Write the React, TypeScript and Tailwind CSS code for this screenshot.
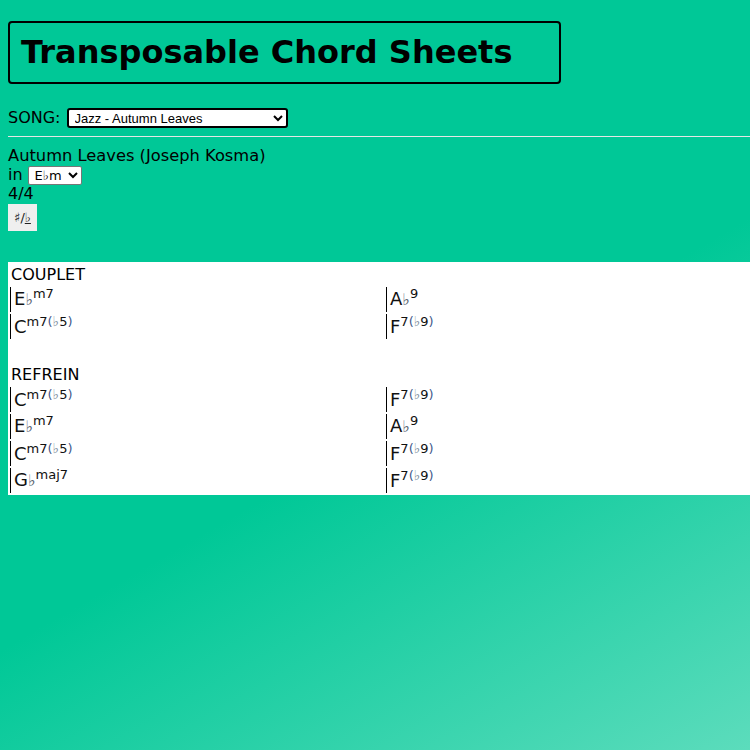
import { useState } from "react";

type Chord = { root: string; flat?: boolean; ext?: string; alt?: string };

const couplet: Chord[][] = [
  [{ root: "E", flat: true, ext: "m7" }, { root: "A", flat: true, ext: "9" }],
  [{ root: "C", ext: "m7", alt: "5" }, { root: "F", ext: "7", alt: "9" }],
];

const refrein: Chord[][] = [
  [{ root: "C", ext: "m7", alt: "5" }, { root: "F", ext: "7", alt: "9" }],
  [{ root: "E", flat: true, ext: "m7" }, { root: "A", flat: true, ext: "9" }],
  [{ root: "C", ext: "m7", alt: "5" }, { root: "F", ext: "7", alt: "9" }],
  [{ root: "G", flat: true, ext: "maj7" }, { root: "F", ext: "7", alt: "9" }],
];

const ChordName = ({ chord }: { chord: Chord }) => (
  <span className="font-['DejaVu_Sans',sans-serif] text-[18px] leading-[22px] text-[#111]">
    {chord.root}
    {chord.flat && <span className="text-[16px] text-[#56616e]">♭</span>}
    <span className="relative top-[-7px] text-[13px] leading-none">
      {chord.ext}
      {chord.alt && (
        <>
          <span className="text-[#3f5a8c]">(</span>
          <span className="text-[14px] text-[#7e8e9c]">♭</span>
          {chord.alt}
          <span className="text-[#3f5a8c]">)</span>
        </>
      )}
    </span>
  </span>
);

const Section = ({ title, rows }: { title: string; rows: Chord[][] }) => (
  <div>
    <div className="h-[18px] pl-[3px] text-[16px] leading-[18px]">{title}</div>
    <div className="mt-[3px] grid grid-cols-2 gap-[2px] px-[2px]">
      {rows.flatMap((row, i) =>
        row.map((c, j) => (
          <div key={`${i}-${j}`} className="flex h-[25px] items-end border-l border-black pb-[1px] pl-[3px]">
            <ChordName chord={c} />
          </div>
        ))
      )}
    </div>
  </div>
);

export default function App() {
  const [song, setSong] = useState("autumn");
  const [key, setKey] = useState("Ebm");

  return (
    <div className="min-h-screen overflow-hidden bg-[linear-gradient(150deg,#00c897_0%,#00c897_55%,#5cdcbc_100%)] p-2 font-['DejaVu_Sans',sans-serif] text-[16px] text-black">
      <h1 className="mt-[13px] w-[553px] rounded-[4px] border-2 border-black px-[11px] pt-[10px] pb-[11px] text-[32px] font-bold leading-[38px]">
        Transposable Chord Sheets
      </h1>

      <div className="mt-[22px] flex items-center gap-[6px]">
        <span>SONG:</span>
        <select
          value={song}
          onChange={(e) => setSong(e.target.value)}
          className="h-[20px] w-[221px] rounded-[3px] border-2 border-black bg-white pl-[2px] font-['Liberation_Sans',sans-serif] text-[13px]"
        >
          <option value="autumn">Jazz - Autumn Leaves</option>
        </select>
      </div>

      <hr className="mt-[6px] -mr-2 border-t border-[#e6e6e6]" />

      <div className="mt-[10px] text-[16.3px] leading-[18px]">Autumn Leaves (Joseph Kosma)</div>
      <div className="flex items-center gap-[5px] leading-[20px]">
        <span>in</span>
        <select
          value={key}
          onChange={(e) => setKey(e.target.value)}
          className="h-[19px] rounded-[2px] border border-[#767676] bg-white px-[2px] font-['DejaVu_Sans',sans-serif] text-[13px]"
        >
          <option value="Ebm">E♭m</option>
        </select>
      </div>
      <div className="leading-[18px]">4/4</div>
      <button className="mt-[1px] h-[27px] w-[29px] border-0 bg-[#efefef] text-[13px] text-[#222]">
        ♯/<span className="underline">♭</span>
      </button>

      <div className="mt-[31px] w-[754px] bg-white pt-[4px] pb-[2px]">
        <Section title="COUPLET" rows={couplet} />
        <div className="mt-[27px]">
          <Section title="REFREIN" rows={refrein} />
        </div>
      </div>
    </div>
  );
}
